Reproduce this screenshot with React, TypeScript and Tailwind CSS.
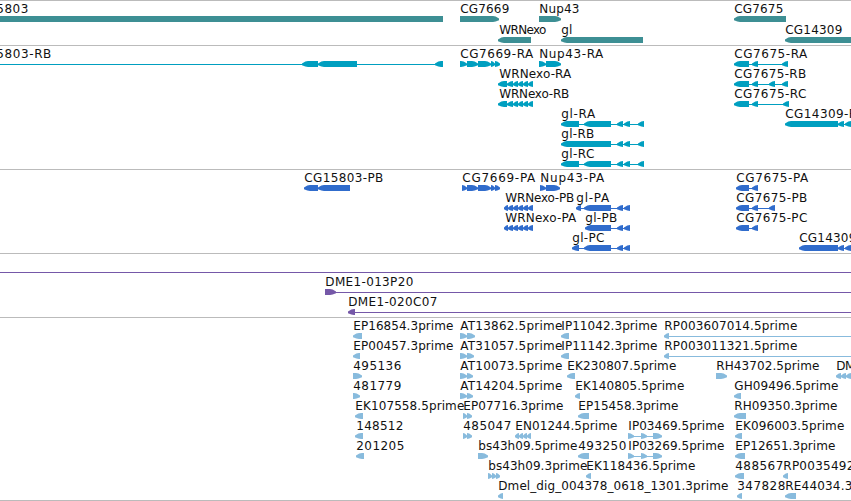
type Direction = 'left' | 'right' | 'none';

type Feature = {
  name?: string;
  x: number;
  textWidth?: number;
  dir: Direction;
  // [start, end] of every block, in canvas units
  blocks: [number, number][];
  // connector, when it is longer than the blocks
  line?: [number, number];
};

type TrackData = {
  id: string;
  color: string;
  className: string;
  laneClassName: string;
  lanes: Feature[][];
};

const left = (name: string, x: number, textWidth: number, blocks: [number, number][], line?: [number, number]): Feature => ({
  name, x, textWidth, dir: 'left', blocks, line,
});

const right = (name: string, x: number, textWidth: number, blocks: [number, number][], line?: [number, number]): Feature => ({
  name, x, textWidth, dir: 'right', blocks, line,
});

const glTail: [number, number][] = [[617, 623], [624, 630]];
const cg7669: [number, number][] = [[467, 478], [478, 491], [491, 495], [495, 500]];
const wrnTail: [number, number][] = [[513, 518], [518, 523], [523, 528], [528, 533]];

const tracks: TrackData[] = [
  {
    id: 'gene',
    color: '#3d8f94',
    className: 'h-[45px]',
    laneClassName: 'h-[21px]',
    lanes: [
      [
        { name: '5803', x: -4, textWidth: 32, dir: 'none', blocks: [[0, 443]] },
        right('CG7669', 460, 49, [[460, 499]]),
        right('Nup43', 539, 40, [[539, 561]]),
        left('CG7675', 734, 49, [[734, 786]]),
      ],
      [
        left('WRNexo', 499, 47, [[498, 531]]),
        left('gl', 561, 11, [[561, 643]]),
        left('CG14309', 785, 57, [[785, 860]]),
      ],
    ],
  },
  {
    id: 'transcript',
    color: '#009fc0',
    className: 'h-[124px]',
    laneClassName: 'h-5',
    lanes: [
      [
        left('5803-RB', -4, 55, [[302, 318], [318, 357], [435, 443]], [0, 443]),
        right('CG7669-RA', 460, 73, [[460, 467], ...cg7669]),
        right('Nup43-RA', 539, 64, [[539, 546], [546, 561]]),
        left('CG7675-RA', 734, 73, [[734, 749], [752, 758], [782, 788]]),
      ],
      [
        left('WRNexo-RA', 499, 72, [[498, 507], [507, 513], ...wrnTail]),
        left('CG7675-RB', 734, 72, [[734, 749], [752, 758], [769, 775], [782, 788]]),
      ],
      [
        left('WRNexo-RB', 499, 70, [[498, 507], [507, 513], ...wrnTail]),
        left('CG7675-RC', 734, 72, [[734, 749], [752, 758], [783, 789]]),
      ],
      [
        left('gl-RA', 561, 34, [[561, 579], [584, 611], ...glTail, [638, 644]]),
        left('CG14309-RA', 785, 80, [[785, 838], [838, 844], [845, 851]]),
      ],
      [left('gl-RB', 561, 33, [[561, 611], ...glTail, [638, 644]])],
      [left('gl-RC', 561, 33, [[561, 579], [584, 611], ...glTail, [638, 644]])],
    ],
  },
  {
    id: 'protein',
    color: '#306ccc',
    className: 'h-[84px]',
    laneClassName: 'h-5',
    lanes: [
      [
        left('CG15803-PB', 304, 79, [[304, 318], [318, 350]]),
        right('CG7669-PA', 462, 73, [[462, 467], ...cg7669]),
        right('Nup43-PA', 540, 64, [[540, 546], [546, 560]]),
        left('CG7675-PA', 736, 72, [[736, 749], [752, 758]]),
      ],
      [
        left('WRNexo-PB', 505, 69, [[504, 508], [508, 513], ...wrnTail]),
        left('gl-PA', 576, 33, [[576, 581], [584, 611], ...glTail]),
        left('CG7675-PB', 736, 71, [[736, 749], [752, 758], [769, 775]]),
      ],
      [
        left('WRNexo-PA', 505, 71, [[504, 508], [508, 513], ...wrnTail]),
        left('gl-PB', 585, 32, [[585, 611], ...glTail]),
        left('CG7675-PC', 736, 71, [[736, 749], [752, 758]]),
      ],
      [
        left('gl-PC', 572, 32, [[572, 579], [584, 611], ...glTail]),
        left('CG14309', 799, 57, [[799, 838], [838, 844], [845, 851]]),
      ],
    ],
  },
  {
    id: 'bac',
    color: '#7558a8',
    className: 'h-16',
    laneClassName: 'h-5',
    lanes: [
      [{ x: 0, dir: 'none', blocks: [], line: [0, 851] }],
      [right('DME1-013P20', 325, 88, [[325, 336]], [325, 851])],
      [left('DME1-020C07', 348, 89, [[348, 355]], [348, 851])],
    ],
  },
  {
    id: 'est',
    color: '#88bbdd',
    className: 'h-[183px]',
    laneClassName: 'h-5',
    lanes: [
      [
        left('EP16854.3prime', 353, 100, [[353, 362]]),
        right('AT13862.5prime', 460, 102, [[460, 467], [467, 475]]),
        left('IP11042.3prime', 561, 96, [[561, 569]]),
        left('RP003607014.5prime', 664, 133, [[664, 669]], [664, 851]),
      ],
      [
        left('EP00457.3prime', 353, 100, [[353, 360]]),
        right('AT31057.5prime', 460, 102, [[460, 467], [467, 474]]),
        left('IP11142.3prime', 561, 96, [[561, 569]]),
        left('RP003011321.5prime', 664, 133, [[664, 669]], [664, 851]),
      ],
      [
        right('495136', 353, 48, [[353, 362]]),
        right('AT10073.5prime', 460, 102, [[460, 467], [467, 473]]),
        left('EK230807.5prime', 567, 109, [[567, 575]]),
        right('RH43702.5prime', 716, 103, [[716, 727]]),
        left('DM', 836, 19, [[836, 841], [841, 846], [846, 851]]),
      ],
      [
        right('481779', 353, 48, [[353, 360]]),
        right('AT14204.5prime', 460, 102, [[460, 467], [467, 473]]),
        left('EK140805.5prime', 575, 109, [[575, 580]]),
        left('GH09496.5prime', 734, 104, [[734, 741]]),
      ],
      [
        left('EK107558.5prime', 355, 109, [[355, 363]]),
        right('EP07716.3prime', 463, 100, [[463, 467], [467, 472]]),
        left('EP15458.3prime', 578, 100, [[578, 589]]),
        left('RH09350.3prime', 734, 103, [[734, 746]]),
      ],
      [
        left('148512', 356, 47, [[355, 363]]),
        right('485047', 463, 48, [[463, 467], [467, 472]]),
        left('EN01244.5prime', 515, 102, [[515, 519], [519, 523], [523, 527], [527, 531]]),
        right('IP03469.5prime', 628, 96, [[628, 634], [641, 647], [653, 662]]),
        left('EK096003.5prime', 735, 109, [[735, 742]]),
      ],
      [
        left('201205', 356, 48, [[356, 364]]),
        right('bs43h09.5prime', 478, 99, [[478, 488]]),
        left('493250', 578, 48, [[578, 589]]),
        right('IP03269.5prime', 628, 96, [[628, 634], [641, 647], [653, 662]]),
        left('EP12651.3prime', 735, 100, [[735, 745]]),
      ],
      [
        right('bs43h09.3prime', 488, 99, [[488, 492], [492, 496], [496, 500]]),
        left('EK118436.5prime', 586, 109, [[586, 591]]),
        left('488567', 735, 48, [[735, 744]]),
        left('RP0035492', 783, 71, [[783, 788]]),
      ],
      [
        left('Dmel_dig_004378_0618_1301.3prime', 498, 230, [[498, 503]]),
        left('347828', 737, 48, [[737, 742]]),
        left('RE44034.3', 785, 67, [[785, 796]]),
      ],
    ],
  },
];

// blunt arrow head on the side the feature points to
function blockPoints(start: number, end: number, dir: Direction) {
  const head = Math.min(6, end - start);
  const mid = head * 0.55;
  if (dir === 'left') {
    return `${start},17.6 ${start + mid},15.6 ${start + head},15 ${end},15 ${end},21 ${start + head},21 ${start + mid},20.6 ${start},19.2`;
  }
  if (dir === 'right') {
    return `${start},15 ${end - head},15 ${end - mid},15.6 ${end},17.6 ${end},19.2 ${end - mid},20.6 ${end - head},21 ${start},21`;
  }
  return `${start},15 ${end},15 ${end},21 ${start},21`;
}

function FeatureGlyph({ feature, color }: { feature: Feature; color: string }) {
  const { name, x, textWidth, dir, blocks } = feature;
  const line = feature.line ?? [blocks[0][0], blocks[blocks.length - 1][1]];

  return (
    <g>
      <rect x={line[0]} y={18} width={line[1] - line[0]} height={1} fill={color} shapeRendering="crispEdges" />
      {blocks.map(([start, end]) => (
        <polygon key={start} points={blockPoints(start, end, dir)} fill={color} />
      ))}
      {name && (
        <text x={x + 0.3} y={12} textLength={textWidth} fill="#111">
          {name}
        </text>
      )}
    </g>
  );
}

function Track({ track }: { track: TrackData }) {
  return (
    <section className={`shrink-0 border-t border-[#bbbbbb] overflow-hidden ${track.className}`}>
      {track.lanes.map((lane, i) => (
        <svg key={i} width="851" height="20" className={`block overflow-visible ${track.laneClassName}`}>
          {lane.map((feature, j) => (
            <FeatureGlyph key={j} feature={feature} color={track.color} />
          ))}
        </svg>
      ))}
    </section>
  );
}

export default function App() {
  return (
    <main className="flex h-[501px] w-[851px] flex-col overflow-hidden bg-white font-['DejaVu_Sans',sans-serif] text-[12px]">
      {tracks.map((track) => (
        <Track key={track.id} track={track} />
      ))}
      <div className="h-px shrink-0 bg-[#bbbbbb]" />
    </main>
  );
}
